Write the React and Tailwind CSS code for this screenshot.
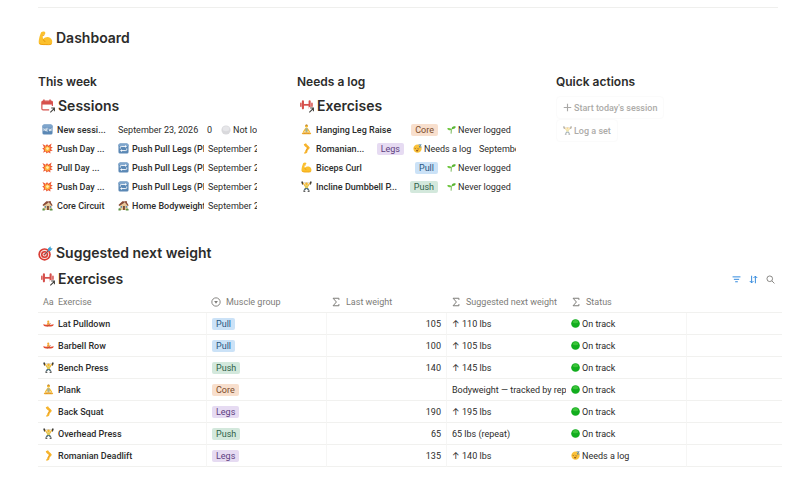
import React from "react";
import clsx from "clsx";

const ICONS = {
  biceps: (
    <>
      <path d="M5 2c2-1.500 6-1.500 6.600.2.5 1.600-.6 3.600-2.400 3.800l-1.400.6c-.3 2.200-.2 4.600.6 6.200 2.600-3 7.400-4 10.800-2 3.400 2 4.400 6.300 3 9.200-1.600 2.600-6.600 2.300-10.600 2.200-4.200 0-8.600.3-10-2C.2 17 2.500 7.500 5 2z" fill="#fbc02d" />
      <path d="M7.500 7.200c1.500.3 2.600-.2 3-1.200M8.500 13.500c.3 1.800 1.500 3 3.200 3.200" stroke="#e08a00" strokeWidth="1.300" fill="none" />
      <path d="M2.500 20c3 2.500 8 1.500 12 1.800 4 .2 6 0 7.500-1.500" stroke="#ef9f0d" strokeWidth="1.500" fill="none" />
    </>
  ),
  calendar: (
    <>
      <path d="M5 1v4M15.500 1v4" stroke="#d6504c" strokeWidth="2.500" />
      <rect x="1.500" y="3.500" width="18" height="15" rx="2" fill="none" stroke="#d6504c" strokeWidth="2" />
      <path d="M1.500 4h18v5.500h-18z" fill="#d6504c" />
      <rect x="14" y="12" width="10" height="12" fill="#fff" />
      <path d="M16 23l6.500-6.500M17.500 15.500h5.500V21" stroke="#3f3e3b" strokeWidth="1.800" fill="none" />
    </>
  ),
  dumbbell: (
    <>
      <path d="M5 4v12M16.500 4v12" stroke="#d6504c" strokeWidth="3.600" strokeLinecap="round" />
      <path d="M1.500 7.500v5M20.500 7.500v5" stroke="#d6504c" strokeWidth="2.600" strokeLinecap="round" />
      <path d="M5 10h12" stroke="#d6504c" strokeWidth="3" />
      <path d="M14.500 14H24v10h-9.500z" fill="#fff" />
      <path d="M16 23l6.500-6.500M17.500 15.500h5.500V21" stroke="#3f3e3b" strokeWidth="1.800" fill="none" />
    </>
  ),
  fresh: (
    <>
      <rect x="1" y="1" width="22" height="22" rx="3.500" fill="#5b88b5" />
      <path d="M1 5a4 4 0 014-4h14a4 4 0 014 4v3H1z" fill="#7ea5cc" />
      <path d="M4 15.500v-6l3.500 6v-6M13 9.500h-3.200v6H13M9.800 12.400h2.800M15 9.500l1.300 6 1.600-5 1.500 5 1.300-6" stroke="#fff" strokeWidth="1.400" fill="none" />
    </>
  ),
  burst: (
    <>
      <path d="M1 2l7 4 3-4 2.500 4L21 1l-2 7 4.500 1.500-4.500 3.500 4.500 4-5.500.5.5 5.500-5-3L10 23l-2-4.500L2.500 21l2-5.500L.5 12l4-2z" fill="#ee5a36" />
      <path d="M6 6.500l4 1.500 2-2.500 1.500 3.500 4-2-1 4 2.500 1.500-3 2 1.500 3.500-4-.8-2 3-2-3-4 1 1.500-3.500L4.500 12l3-1.500z" fill="#ffb63b" />
      <circle cx="12" cy="12" r="3" fill="#fff0b0" />
    </>
  ),
  repeat: (
    <>
      <rect x="1" y="1" width="22" height="22" rx="3.500" fill="#5b88b5" />
      <path d="M1 5a4 4 0 014-4h14a4 4 0 014 4v2H1z" fill="#7ea5cc" />
      <path d="M5 12V9.500a2 2 0 012-2h10M19 12v2.500a2 2 0 01-2 2H7" stroke="#fff" strokeWidth="2" fill="none" />
      <path d="M15.500 4.500l4 3-4 3zM8.500 13.500l-4 3 4 3z" fill="#fff" />
    </>
  ),
  house: (
    <>
      <path d="M16 2h3v6h-3z" fill="#97543b" />
      <path d="M4 10l6-5 11 5v12H4z" fill="#e9c99a" />
      <path d="M1 11L9.500 2.500 18 3l5.500 9-3 .5-5-7.500L3 13z" fill="#8a4b37" />
      <path d="M11 13h4v9h-4z" fill="#7b4a33" />
      <path d="M6 13h3v4H6zM17 13h3v4h-3z" fill="#548fb5" />
      <path d="M1 19c2-2 4-1 5 0v4H1zM17 19.500c2-1.500 5-1.500 6 0V23h-6z" fill="#5d9144" />
    </>
  ),
  yoga: (
    <>
      <circle cx="12" cy="5" r="3.200" fill="#f7bd2f" />
      <path d="M9 3.500c1-3 5-3 6 0l-3-.5z" fill="#a5682a" />
      <path d="M9 9h6l5 8-2 1.500-4-5v5h-4v-5l-4 5L4 17z" fill="#f7bd2f" />
      <path d="M9.300 9h5.400l-.5 8H9.800z" fill="#a3b098" />
      <path d="M2 19.500c4-3 7-1 10-.5 3-.5 6-2.500 10 .5.600 2-1 3-3 3H5c-2 0-3.600-1-3-3z" fill="#efaa2c" />
      <path d="M6 21l6-2 6 2" stroke="#c77d17" strokeWidth="1" fill="none" />
    </>
  ),
  leg: (
    <>
      <path d="M6 2.500L11 .5c1.500 3.500 6.500 6 8 9.500.5 2.500-3 4.500-4.500 6.500-.8 1.800 0 3.500-1.500 4.500-1.500 1.300-4 2.200-6 2-1-.5-.4-2 .5-2.500 1.300-.8 2-2 2.500-4 .5-2 2.500-4 3-5.500C11 8.500 6.500 6.500 6 2.500z" fill="#f7b42c" />
      <path d="M14.500 9.500c-.5 3-3.500 5-3.500 8" stroke="#dd8c16" strokeWidth="1.200" fill="none" />
    </>
  ),
  lifter: (
    <>
      <path d="M1.500 4h21" stroke="#8c8c8c" strokeWidth="1" />
      <path d="M.5 1.500L3.500.5l2 6-3 1.500zM23.500 1.500l-3-1-2 6 3 1.500z" fill="#33332f" />
      <path d="M5 5l3.500 5.500M19 5l-3.500 5.500" stroke="#efb22f" strokeWidth="2.500" strokeLinecap="round" />
      <circle cx="12" cy="6.500" r="3" fill="#f3b72f" />
      <path d="M8 9.500h8l-1 6H9z" fill="#dfc956" />
      <path d="M8.500 15h7l2.500 4-2.500 1.500-3.500-3.500-3.500 3.500L6 19z" fill="#53727b" />
      <path d="M7 19.500l-1 3.500h3.500M17 19.500l1 3.500h-3.500" stroke="#3c3c3c" strokeWidth="1.800" fill="none" />
    </>
  ),
  boat: (
    <>
      <circle cx="11.500" cy="7.500" r="2.300" fill="#f3ad2f" />
      <path d="M10 9.500h3.500l1.500 5H8z" fill="#f5a138" />
      <path d="M.5 13.500l6 1h11l6-1c-.5 3-3 5-6 5H6.500c-3 0-5.500-2-6-5z" fill="#e24a2f" />
      <path d="M17 11L9 19" stroke="#9b5830" strokeWidth="1.200" />
    </>
  ),
  target: (
    <>
      <circle cx="10.500" cy="13.500" r="10" fill="#d83c34" />
      <circle cx="10.500" cy="13.500" r="7.400" fill="#f6dfdc" />
      <circle cx="10.500" cy="13.500" r="5.700" fill="#d83c34" />
      <circle cx="10.500" cy="13.500" r="3.200" fill="#f6dfdc" />
      <circle cx="10.500" cy="13.500" r="1.700" fill="#d83c34" />
      <path d="M10.500 13.500L19 5" stroke="#46606c" strokeWidth="1.500" />
      <path d="M16 7.500V4l4-3.500.5 3 3 .5L20 8z" fill="#42a5d5" />
    </>
  ),
  sprout: (
    <>
      <path d="M11 23c0-6 .5-10 3-14" stroke="#58a832" strokeWidth="2.200" fill="none" />
      <path d="M12.500 10c0-5 5-8 11-5.500-1.500 4.500-6 7.500-11 5.500z" fill="#58b531" />
      <path d="M12 13C11 8.500 6 6.500.5 9c1 4 6.500 6.500 11.500 4z" fill="#6fc63f" />
    </>
  ),
  sleepy: (
    <>
      <circle cx="12" cy="12.500" r="11" fill="#fbc23a" />
      <path d="M4 11c1.500 1.500 3.500 1.500 4.500 0M12 12c1.500 1.500 3.500 1.500 4.500 0" stroke="#7a4a12" strokeWidth="1.600" fill="none" />
      <ellipse cx="11" cy="17.500" rx="3" ry="2.300" fill="#9a5f1c" />
      <path d="M15 2h7l-6 6h7" stroke="#4a7fa8" strokeWidth="2" fill="none" />
    </>
  ),
  green: (
    <>
      <circle cx="12" cy="12" r="11.500" fill="#12ad1e" />
      <ellipse cx="12" cy="7" rx="7.500" ry="4.500" fill="#3cc43a" />
    </>
  ),
  white: (
    <>
      <circle cx="12" cy="12" r="11" fill="#d9d9dc" />
      <ellipse cx="12" cy="9" rx="8" ry="6" fill="#e6e6e9" />
    </>
  ),
  plus: <path d="M12 2v20M2 12h20" stroke="#55544f" strokeWidth="3" />,
  sigma: <path d="M19 7V3H5l8 9-8 9h14v-4" stroke="currentColor" strokeWidth="2.400" fill="none" />,
  select: (
    <>
      <circle cx="12" cy="12" r="10" stroke="currentColor" strokeWidth="2.200" fill="none" />
      <path d="M7.500 9.500h9L12 16z" fill="currentColor" />
    </>
  ),
  filter: <path d="M1.500 5h21M5 11.500h14M8.500 18h7" stroke="currentColor" strokeWidth="2.600" fill="none" />,
  sort: <path d="M7 2v19M2 16l5 5 5-5M17 22V3M12 8l5-5 5 5" stroke="currentColor" strokeWidth="2.600" fill="none" />,
  search: (
    <>
      <circle cx="10" cy="10" r="7.500" stroke="currentColor" strokeWidth="2.400" fill="none" />
      <path d="M15.500 15.500l7 7" stroke="currentColor" strokeWidth="2.400" />
    </>
  ),
};

const Icon = ({ name, className = "size-[11px]" }) => (
  <svg viewBox="0 0 24 24" aria-hidden="true" className={clsx("shrink-0", className)}>
    {ICONS[name]}
  </svg>
);

const TAG_COLORS = {
  Pull: "bg-[#cbe2f7] text-[#2a5580]",
  Push: "bg-[#d3e8dc] text-[#2f5f48]",
  Core: "bg-[#f8dfcd] text-[#7a4a2a]",
  Legs: "bg-[#e6dbf2] text-[#5d4080]",
};

const Tag = ({ name }) => (
  <span className={clsx("inline-block shrink-0 rounded-[2px] px-1 leading-3", TAG_COLORS[name])}>
    {name}
  </span>
);

const sessions = [
  { icon: "burst", name: "Push Day ...", program: "Push Pull Legs (PPL)", programIcon: "repeat" },
  { icon: "burst", name: "Pull Day ...", program: "Push Pull Legs (PPL)", programIcon: "repeat" },
  { icon: "burst", name: "Push Day ...", program: "Push Pull Legs (PPL)", programIcon: "repeat" },
  { icon: "house", name: "Core Circuit", program: "Home Bodyweight", programIcon: "house" },
];

const unlogged = [
  { icon: "yoga", name: "Hanging Leg Raise", group: "Core" },
  { icon: "leg", name: "Romanian...", group: "Legs", date: "September 2, 2026" },
  { icon: "biceps", name: "Biceps Curl", group: "Pull" },
  { icon: "lifter", name: "Incline Dumbbell P...", group: "Push" },
];

const exercises = [
  { icon: "boat", name: "Lat Pulldown", group: "Pull", last: 105, next: "110 lbs", up: true },
  { icon: "boat", name: "Barbell Row", group: "Pull", last: 100, next: "105 lbs", up: true },
  { icon: "lifter", name: "Bench Press", group: "Push", last: 140, next: "145 lbs", up: true },
  { icon: "yoga", name: "Plank", group: "Core", last: "", next: "Bodyweight — tracked by reps" },
  { icon: "leg", name: "Back Squat", group: "Legs", last: 190, next: "195 lbs", up: true },
  { icon: "lifter", name: "Overhead Press", group: "Push", last: 65, next: "65 lbs (repeat)" },
  { icon: "leg", name: "Romanian Deadlift", group: "Legs", last: 135, next: "140 lbs", up: true, needsLog: true },
];

const SectionTitle = ({ icon, children }) => (
  <h2 className="flex items-center gap-[3px] font-['Inter','Liberation_Sans',sans-serif] text-[14px] leading-5 font-semibold">
    <Icon name={icon} className="size-[15px]" />
    {children}
  </h2>
);

const ColumnTitle = ({ children }) => (
  <h3 className="mb-[6px] font-['Inter','Liberation_Sans',sans-serif] text-[12px] leading-4 font-semibold">
    {children}
  </h3>
);

const ViewTitle = ({ icon, children }) => (
  <h4 className="flex items-center gap-[3px] pl-[3px] font-['Inter','Liberation_Sans',sans-serif] text-[14px] leading-5 font-semibold">
    <Icon name={icon} className="size-[14px]" />
    {children}
  </h4>
);

const ItemName = ({ icon, children, className }) => (
  <span className={clsx("flex items-center gap-1 font-medium", className)}>
    <Icon name={icon} />
    {children}
  </span>
);

const SessionList = () => (
  <ul className="mt-1 overflow-hidden pl-1 whitespace-nowrap">
    <li className="flex h-[19px] items-center">
      <ItemName icon="fresh" className="w-[76px] shrink-0">New sessi...</ItemName>
      <span className="w-[89px] shrink-0">September 23, 2026</span>
      <span className="w-[14px] shrink-0">0</span>
      <Icon name="white" className="mr-[2px] size-[10px]" />
      <span>Not logged</span>
    </li>
    {sessions.map((session, index) => (
      <li key={index} className="flex h-[19px] items-center">
        <ItemName icon={session.icon} className="w-[76px] shrink-0">{session.name}</ItemName>
        <a href="#program" className="mr-1 flex w-[86px] shrink-0 items-center gap-[3px] overflow-hidden font-medium">
          <Icon name={session.programIcon} />
          <span className="shadow-[0_1px_0_#eeeeec]">{session.program}</span>
        </a>
        <span>September 23, 2026</span>
      </li>
    ))}
  </ul>
);

const UnloggedList = () => (
  <ul className="mt-1 pl-1 whitespace-nowrap">
    {unlogged.map((item) => (
      <li key={item.name} className="flex h-[19px] items-center gap-[9px]">
        <ItemName icon={item.icon} className="min-w-0 flex-1">{item.name}</ItemName>
        <Tag name={item.group} />
        {item.date ? (
          <span className="flex w-[103px] items-center gap-[2px] overflow-hidden">
            <Icon name="sleepy" className="size-[9px]" />
            <span className="w-[53px] shrink-0">Needs a log</span>
            <span>{item.date}</span>
          </span>
        ) : (
          <span className="flex w-[69px] items-center gap-[2px]">
            <Icon name="sprout" className="size-[9px]" />
            Never logged
          </span>
        )}
      </li>
    ))}
  </ul>
);

const QuickButton = ({ icon, label }) => (
  <button
    type="button"
    className="flex h-[23px] w-fit items-center gap-[2px] rounded-sm border border-[#fbfbfb] px-[6px] font-medium text-[#acaba8]"
  >
    <Icon name={icon} className="size-[9px] opacity-50" />
    {label}
  </button>
);

const HeadCell = ({ icon, children }) => (
  <th scope="col" className="h-[22px] border-b border-[#f1f1ef] px-[5px] text-left font-normal">
    <span className="flex items-center gap-1">
      {icon ? <Icon name={icon} className="mr-[1px] size-[10px]" /> : <span className="w-[11px]">Aa</span>}
      {children}
    </span>
  </th>
);

const cell = "h-[22px] overflow-hidden border-b border-b-[#f1f1ef] border-l-[#f6f6f5] px-[5px] py-0";

const ExerciseTable = () => (
  <table className="w-full table-fixed border-separate border-spacing-0 whitespace-nowrap">
    <colgroup>
      <col className="w-[168px]" />
      <col className="w-[120px]" />
      <col className="w-[120px]" />
      <col className="w-[120px]" />
      <col className="w-[120px]" />
      <col />
    </colgroup>
    <thead className="text-[#7d7c78]">
      <tr>
        <HeadCell>Exercise</HeadCell>
        <HeadCell icon="select">Muscle group</HeadCell>
        <HeadCell icon="sigma">Last weight</HeadCell>
        <HeadCell icon="sigma">Suggested next weight</HeadCell>
        <HeadCell icon="sigma">Status</HeadCell>
        <td className="border-b border-[#f1f1ef]"></td>
      </tr>
    </thead>
    <tbody>
      {exercises.map((exercise) => (
        <tr key={exercise.name}>
          <td className={cell}>
            <ItemName icon={exercise.icon}>{exercise.name}</ItemName>
          </td>
          <td className={clsx(cell, "border-l")}>
            <Tag name={exercise.group} />
          </td>
          <td className={clsx(cell, "border-l text-right")}>{exercise.last}</td>
          <td className={clsx(cell, "border-l")}>
            <div className="-mr-[5px] overflow-hidden">
              {exercise.up && <span className="font-['Inter',sans-serif]">↑ </span>}
              {exercise.next}
            </div>
          </td>
          <td className={cell}>
            <span className="flex items-center gap-[2px]">
              <Icon name={exercise.needsLog ? "sleepy" : "green"} className="size-[9px]" />
              {exercise.needsLog ? "Needs a log" : "On track"}
            </span>
          </td>
          <td className={clsx(cell, "border-l")}></td>
        </tr>
      ))}
    </tbody>
  </table>
);

const App = () => {
  return (
    <main className="min-h-screen bg-white pt-[7px] pr-[18px] pb-4 pl-[38px] font-['Roboto','Liberation_Sans',sans-serif] text-[9px] leading-3 text-[#2c2c2b]">
      <hr className="mr-1 border-[#efefed]" />

      <div className="mt-5">
        <SectionTitle icon="biceps">Dashboard</SectionTitle>
      </div>

      <div className="mt-[26px] mr-[7px] grid grid-cols-3 gap-10">
        <section className="min-w-0">
          <ColumnTitle>This week</ColumnTitle>
          <ViewTitle icon="calendar">Sessions</ViewTitle>
          <SessionList />
        </section>

        <section className="min-w-0">
          <ColumnTitle>Needs a log</ColumnTitle>
          <ViewTitle icon="dumbbell">Exercises</ViewTitle>
          <UnloggedList />
        </section>

        <section className="min-w-0">
          <ColumnTitle>Quick actions</ColumnTitle>
          <QuickButton icon="plus" label="Start today's session" />
          <QuickButton icon="lifter" label="Log a set" />
        </section>
      </div>

      <section className="mt-7">
        <SectionTitle icon="target">Suggested next weight</SectionTitle>
        <div className="mt-[6px] mb-[2px] flex items-center justify-between">
          <ViewTitle icon="dumbbell">Exercises</ViewTitle>
          <div className="flex gap-2 pr-[7px] text-[#2f88dd]">
            <button type="button" aria-label="Filter">
              <Icon name="filter" className="size-[9px]" />
            </button>
            <button type="button" aria-label="Sort">
              <Icon name="sort" className="size-[9px]" />
            </button>
            <button type="button" aria-label="Search" className="text-[#7d7c78]">
              <Icon name="search" className="size-[9px]" />
            </button>
          </div>
        </div>
        <ExerciseTable />
      </section>
    </main>
  );
};

export default App;
